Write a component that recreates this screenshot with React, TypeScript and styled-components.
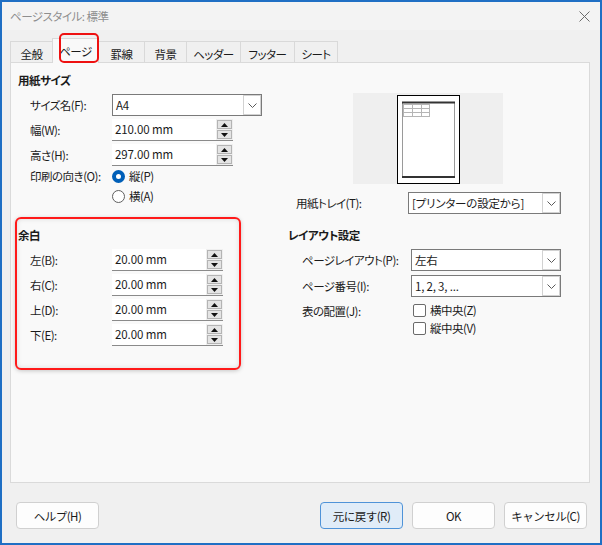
import styled, { createGlobalStyle, css } from 'styled-components';

// UI text in the original uses a narrow proportional Japanese face
const uiText = css`
  font-size: 11.5px;
  letter-spacing: -0.5px;
`;

const GlobalStyle = createGlobalStyle`
  html, body {
    margin: 0;
    padding: 0;
    background: #ffffff;
  }
  body {
    font-family: "Noto Sans CJK JP", "Noto Sans", sans-serif;
    ${uiText};
    color: #1b1b1b;
    font-feature-settings: "palt";
  }
`;

const TABS = [
  { label: '全般', width: 43 },
  { label: 'ページ', width: 47, active: true },
  { label: '罫線', width: 47 },
  { label: '背景', width: 43 },
  { label: 'ヘッダー', width: 55 },
  { label: 'フッター', width: 55 },
  { label: 'シート', width: 44 },
];

function Chevron() {
  return (
    <svg width="9" height="5" viewBox="0 0 9 5">
      <polyline points="0.5,0.5 4.5,4.5 8.5,0.5" fill="none" stroke="#5a5a5a" strokeWidth="1" />
    </svg>
  );
}

function Dropdown({ value, width }: { value: string; width: number }) {
  return (
    <Select $width={width}>
      <SelectValue>{value}</SelectValue>
      <SelectButton>
        <Chevron />
      </SelectButton>
    </Select>
  );
}

function SpinBox({ value, width }: { value: string; width: number }) {
  return (
    <Spin>
      <SpinInput $width={width}>{value}</SpinInput>
      <SpinButtons>
        <SpinButton>
          <svg width="7" height="4" viewBox="0 0 7 4">
            <polygon points="3.5,0 7,4 0,4" fill="#111" />
          </svg>
        </SpinButton>
        <SpinButton>
          <svg width="7" height="4" viewBox="0 0 7 4">
            <polygon points="0,0 7,0 3.5,4" fill="#111" />
          </svg>
        </SpinButton>
      </SpinButtons>
    </Spin>
  );
}

function PagePreview() {
  return (
    <Preview>
      <svg width="150" height="91" viewBox="0 0 150 91">
        <rect x="44.5" y="2.5" width="62" height="88" fill="#fff" stroke="#000" />
        <rect x="49.5" y="9.5" width="52" height="75" fill="none" stroke="#9a9a9a" />
        <rect x="49" y="8.5" width="53" height="2" fill="#333" />
        <rect x="49" y="83" width="53" height="2" fill="#333" />
        <g stroke="#b5b5b5" fill="none">
          <rect x="50.5" y="11.5" width="26" height="12" />
          <line x1="59.5" y1="11.5" x2="59.5" y2="23.5" />
          <line x1="68.5" y1="11.5" x2="68.5" y2="23.5" />
          <line x1="50.5" y1="15.5" x2="76.5" y2="15.5" />
          <line x1="50.5" y1="19.5" x2="76.5" y2="19.5" />
        </g>
      </svg>
    </Preview>
  );
}

export default function App() {
  return (
    <>
      <GlobalStyle />
      <Window>
        <TitleBar>
          <Title>ページスタイル: 標準</Title>
          <svg width="11" height="11" viewBox="0 0 11 11">
            <path d="M0.5 0.5 L10.5 10.5 M10.5 0.5 L0.5 10.5" stroke="#6b6b6b" strokeWidth="1" />
          </svg>
        </TitleBar>

        <Body>
          <TabStrip>
            {TABS.map((t) => (
              <Tab key={t.label} $width={t.width} $active={!!t.active}>
                {t.label}
              </Tab>
            ))}
          </TabStrip>

          <Panel>
            <LeftColumn>
              <SectionTitle>用紙サイズ</SectionTitle>
              <FieldList $indent={12} $gap={3}>
                <FieldRow>
                  <Label $width={82}>サイズ名(F):</Label>
                  <Dropdown value="A4" width={150} />
                </FieldRow>
                <FieldRow>
                  <Label $width={82}>幅(W):</Label>
                  <SpinBox value="210.00 mm" width={104} />
                </FieldRow>
                <FieldRow>
                  <Label $width={82}>高さ(H):</Label>
                  <SpinBox value="297.00 mm" width={104} />
                </FieldRow>
              </FieldList>
              <OrientationBlock>
                <Label $width={82}>印刷の向き(O):</Label>
                <OptionList>
                  <OptionRow $height={20}>
                    <Radio $checked />
                    縦(P)
                  </OptionRow>
                  <OptionRow $height={20}>
                    <Radio />
                    横(A)
                  </OptionRow>
                </OptionList>
              </OrientationBlock>

              <MarginSection>
                <SectionTitle>余白</SectionTitle>
                <FieldList $indent={12} $gap={3}>
                  {['左(B):', '右(C):', '上(D):', '下(E):'].map((l) => (
                    <FieldRow key={l}>
                      <Label $width={82}>{l}</Label>
                      <SpinBox value="20.00 mm" width={94} />
                    </FieldRow>
                  ))}
                </FieldList>
              </MarginSection>
            </LeftColumn>

            <RightColumn>
              <PagePreview />
              <TrayRow>
                <Label $width={112}>用紙トレイ(T):</Label>
                <Dropdown value="[プリンターの設定から]" width={153} />
              </TrayRow>

              <LayoutSection>
                <SectionTitle>レイアウト設定</SectionTitle>
                <FieldList $indent={14} $gap={4}>
                  <FieldRow>
                    <Label $width={109}>ページレイアウト(P):</Label>
                    <Dropdown value="左右" width={150} />
                  </FieldRow>
                  <FieldRow>
                    <Label $width={109}>ページ番号(I):</Label>
                    <Dropdown value="1, 2, 3, ..." width={150} />
                  </FieldRow>
                  <AlignBlock>
                    <Label $width={110}>表の配置(J):</Label>
                    <OptionList>
                      <OptionRow $height={18}>
                        <Checkbox />
                        横中央(Z)
                      </OptionRow>
                      <OptionRow $height={18}>
                        <Checkbox />
                        縦中央(V)
                      </OptionRow>
                    </OptionList>
                  </AlignBlock>
                </FieldList>
              </LayoutSection>
            </RightColumn>
          </Panel>
        </Body>

        <Footer>
          <Button>ヘルプ(H)</Button>
          <ButtonGroup>
            <Button $primary>元に戻す(R)</Button>
            <Button>OK</Button>
            <Button>キャンセル(C)</Button>
          </ButtonGroup>
        </Footer>

        <TabHighlight />
        <MarginHighlight />
      </Window>
    </>
  );
}

const Window = styled.div`
  position: relative;
  width: 602px;
  height: 545px;
  box-sizing: border-box;
  border: 2px solid #1f6fc4;
  background: #f0f0f0;
  display: flex;
  flex-direction: column;
  overflow: hidden;
`;

const TitleBar = styled.div`
  flex: none;
  height: 28px;
  display: flex;
  align-items: center;
  justify-content: space-between;
  padding: 0 10px 0 8px;
  background: #f3f3f3;
`;

const Title = styled.span`
  color: #8e8e8e;
`;

const Body = styled.div`
  flex: none;
  padding: 8px 0 0 8px;
`;

const TabStrip = styled.div`
  display: flex;
  align-items: flex-end;
  height: 24px;
  position: relative;
  z-index: 1;
`;

const Tab = styled.div<{ $width: number; $active: boolean }>`
  box-sizing: border-box;
  width: ${(p) => p.$width}px;
  height: ${(p) => (p.$active ? 25 : 21)}px;
  margin-bottom: ${(p) => (p.$active ? -1 : 0)}px;
  margin-left: -1px;
  display: flex;
  align-items: center;
  justify-content: center;
  padding-top: ${(p) => (p.$active ? 0 : 3)}px;
  border: 1px solid #d9d9d9;
  border-bottom: none;
  background: ${(p) => (p.$active ? '#f9f9f9' : '#f0f0f0')};
  white-space: nowrap;

  &:first-child {
    margin-left: 0;
  }
`;

const Panel = styled.div`
  box-sizing: border-box;
  width: 580px;
  height: 421px;
  border: 1px solid #dadada;
  background: #f9f9f9;
  display: flex;
  padding: 9px 0 0 7px;
`;

const LeftColumn = styled.div`
  width: 270px;
  flex: none;
  display: flex;
  flex-direction: column;
`;

const RightColumn = styled.div`
  width: 273px;
  flex: none;
  display: flex;
  flex-direction: column;
`;

const SectionTitle = styled.div`
  font-weight: bold;
  line-height: 16px;
  height: 16px;
`;

const FieldList = styled.div<{ $indent: number; $gap: number }>`
  display: flex;
  flex-direction: column;
  gap: ${(p) => p.$gap}px;
  margin-top: 6px;
  padding-left: ${(p) => p.$indent}px;
`;

const FieldRow = styled.div`
  display: flex;
  align-items: center;
  height: 22px;
`;

const Label = styled.span<{ $width: number }>`
  flex: none;
  width: ${(p) => p.$width}px;
  white-space: nowrap;
  line-height: 20px;
`;

const OrientationBlock = styled.div`
  display: flex;
  align-items: flex-start;
  padding-left: 12px;
`;

const AlignBlock = styled.div`
  display: flex;
  align-items: flex-start;
`;

const OptionList = styled.div`
  display: flex;
  flex-direction: column;
`;

const OptionRow = styled.div<{ $height: number }>`
  display: flex;
  align-items: center;
  gap: 4px;
  height: ${(p) => p.$height}px;
  white-space: nowrap;
`;

const Radio = styled.span<{ $checked?: boolean }>`
  box-sizing: border-box;
  width: 13px;
  height: 13px;
  border-radius: 50%;
  flex: none;
  border: ${(p) => (p.$checked ? '4px solid #005fb8' : '1px solid #5f5f5f')};
  background: #ffffff;
`;

const Checkbox = styled.span`
  box-sizing: border-box;
  width: 13px;
  height: 13px;
  flex: none;
  border: 1px solid #6a6a6a;
  border-radius: 2px;
  background: #ffffff;
  margin-left: 1px;
`;

const MarginSection = styled.div`
  margin-top: 21px;
`;

const Select = styled.div<{ $width: number }>`
  box-sizing: border-box;
  width: ${(p) => p.$width}px;
  height: 22px;
  display: flex;
  align-items: stretch;
  border: 1px solid #7a7a7a;
  background: #ffffff;
`;

const SelectValue = styled.span`
  flex: 1;
  padding-left: 3px;
  line-height: 20px;
  letter-spacing: -0.2px;
  white-space: nowrap;
  overflow: hidden;
`;

const SelectButton = styled.span`
  box-sizing: border-box;
  width: 18px;
  display: flex;
  align-items: center;
  justify-content: center;
  border: 1px solid #d2d2d2;
  background: #ffffff;
`;

const Spin = styled.div`
  display: flex;
  height: 22px;
  border-bottom: 1px solid #8a8a8a;
  box-sizing: border-box;
`;

const SpinInput = styled.span<{ $width: number }>`
  box-sizing: border-box;
  width: ${(p) => p.$width}px;
  padding-left: 3px;
  line-height: 21px;
  letter-spacing: -0.1px;
  background: #ffffff;
  white-space: nowrap;
`;

const SpinButtons = styled.div`
  width: 17px;
  display: flex;
  flex-direction: column;
  align-items: center;
  justify-content: center;
  gap: 1px;
  background: #efefef;
`;

const SpinButton = styled.span`
  box-sizing: border-box;
  width: 15px;
  height: 9px;
  display: flex;
  align-items: center;
  justify-content: center;
  border: 1px solid #b4b4b4;
  background: #e4e4e4;
`;

const Preview = styled.div`
  margin: 21px 0 0 65px;
  width: 150px;
  height: 91px;
  background: #efefef;
  display: flex;
`;

const TrayRow = styled.div`
  display: flex;
  align-items: center;
  height: 22px;
  margin-top: 8px;
  padding-left: 8px;
`;

const LayoutSection = styled.div`
  margin-top: 13px;
`;

const Footer = styled.div`
  flex: none;
  display: flex;
  justify-content: space-between;
  padding: 19px 13px 0 14px;
`;

const ButtonGroup = styled.div`
  display: flex;
  gap: 9px;
`;

const Button = styled.button<{ $primary?: boolean }>`
  ${uiText};
  box-sizing: border-box;
  width: 83px;
  height: 27px;
  border-radius: 4px;
  border: 1px solid ${(p) => (p.$primary ? '#4f93d8' : '#d0d0d0')};
  background: ${(p) => (p.$primary ? '#e0ecf8' : '#fdfdfd')};
  font-family: inherit;
  color: #1b1b1b;
  padding: 0;
`;

const TabHighlight = styled.div`
  position: absolute;
  left: 57px;
  top: 31px;
  width: 40px;
  height: 30px;
  box-sizing: border-box;
  border: 2px solid #ee1111;
  border-radius: 5px;
  z-index: 2;
`;

const MarginHighlight = styled.div`
  position: absolute;
  left: 13px;
  top: 215px;
  width: 226px;
  height: 153px;
  box-sizing: border-box;
  border: 2px solid #ff1a1a;
  border-radius: 6px;
  box-shadow: 0 1px 4px rgba(0, 0, 0, 0.2), inset 0 0 5px rgba(0, 0, 0, 0.12);
  z-index: 2;
`;
